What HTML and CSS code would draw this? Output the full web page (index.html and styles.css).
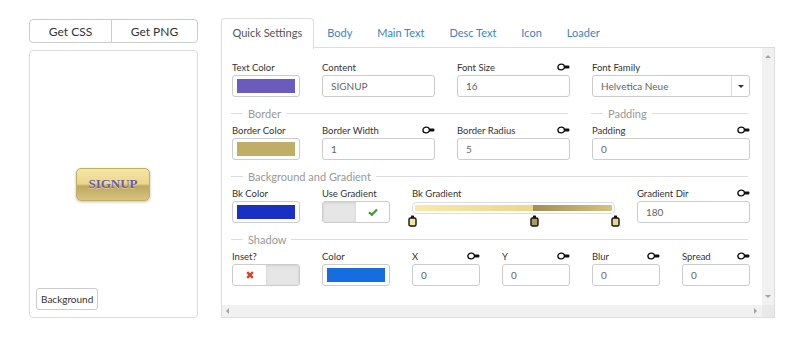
FILE: index.html
```html
<!DOCTYPE html>
<html lang="en">
<head>
    <meta charset="UTF-8">
    <meta name="viewport" content="width=device-width, initial-scale=1.0">
    <title>Button Builder</title>
    <link rel="stylesheet" href="styles.css">
</head>
<body>

    <div class="app">
        <aside class="preview-col">
            <div class="btn-group">
                <button class="css-btn">Get CSS</button>
                <button class="png-btn">Get PNG</button>
            </div>
            <div class="preview">
                <button class="signup">SIGNUP</button>
                <button class="bg-btn">Background</button>
            </div>
        </aside>

        <main class="editor">
            <ul class="tabs">
                <li class="active">Quick Settings</li>
                <li>Body</li>
                <li>Main Text</li>
                <li>Desc Text</li>
                <li>Icon</li>
                <li>Loader</li>
            </ul>

            <div class="panel">
                <div class="panel-body">

                    <div class="row row-a">
                        <div class="field">
                            <label>Text Color</label>
                            <div class="swatch"><span class="c-text"></span></div>
                        </div>
                        <div class="field">
                            <label>Content</label>
                            <div class="input">SIGNUP</div>
                        </div>
                        <div class="field">
                            <label>Font Size <svg class="knob" viewBox="0 0 13 8"><ellipse cx="4.2" cy="4" rx="3.3" ry="2.9"/><rect x="7.6" y="2.5" width="4.8" height="3" rx="1"/></svg></label>
                            <div class="input">16</div>
                        </div>
                        <div class="field">
                            <label>Font Family</label>
                            <div class="input select">Helvetica Neue<span class="caret"></span></div>
                        </div>
                    </div>

                    <div class="row row-a">
                        <h4 class="section span-3">Border</h4>
                        <h4 class="section">Padding</h4>
                        <div class="field">
                            <label>Border Color</label>
                            <div class="swatch"><span class="c-border"></span></div>
                        </div>
                        <div class="field">
                            <label>Border Width <svg class="knob" viewBox="0 0 13 8"><ellipse cx="4.2" cy="4" rx="3.3" ry="2.9"/><rect x="7.6" y="2.5" width="4.8" height="3" rx="1"/></svg></label>
                            <div class="input">1</div>
                        </div>
                        <div class="field">
                            <label>Border Radius <svg class="knob" viewBox="0 0 13 8"><ellipse cx="4.2" cy="4" rx="3.3" ry="2.9"/><rect x="7.6" y="2.5" width="4.8" height="3" rx="1"/></svg></label>
                            <div class="input">5</div>
                        </div>
                        <div class="field">
                            <label>Padding <svg class="knob" viewBox="0 0 13 8"><ellipse cx="4.2" cy="4" rx="3.3" ry="2.9"/><rect x="7.6" y="2.5" width="4.8" height="3" rx="1"/></svg></label>
                            <div class="input">0</div>
                        </div>
                    </div>

                    <div class="row row-c">
                        <h4 class="section span-4">Background and Gradient</h4>
                        <div class="field">
                            <label>Bk Color</label>
                            <div class="swatch"><span class="c-bk"></span></div>
                        </div>
                        <div class="field">
                            <label>Use Gradient</label>
                            <div class="toggle">
                                <span class="off"></span>
                                <span class="on"><svg class="tick" viewBox="0 0 10 8"><path d="M1 4.2 L3.8 6.8 L9 1.4" /></svg></span>
                            </div>
                        </div>
                        <div class="field">
                            <label>Bk Gradient</label>
                            <div class="gradient">
                                <div class="gradient-bar"></div>
                                <svg class="stop" style="left: 0%" viewBox="0 0 9 12"><rect x="3" y="0.6" width="3" height="2.4" rx="0.5" fill="#111"/><rect x="1" y="3" width="7" height="8" rx="1.6" fill="#f6e5a2"/></svg>
                                <svg class="stop" style="left: 60%" viewBox="0 0 9 12"><rect x="3" y="0.6" width="3" height="2.4" rx="0.5" fill="#111"/><rect x="1" y="3" width="7" height="8" rx="1.6" fill="#ae9a5f"/></svg>
                                <svg class="stop" style="left: 100%" viewBox="0 0 9 12"><rect x="3" y="0.6" width="3" height="2.4" rx="0.5" fill="#111"/><rect x="1" y="3" width="7" height="8" rx="1.6" fill="#e9d58f"/></svg>
                            </div>
                        </div>
                        <div class="field">
                            <label>Gradient Dir <svg class="knob" viewBox="0 0 13 8"><ellipse cx="4.2" cy="4" rx="3.3" ry="2.9"/><rect x="7.6" y="2.5" width="4.8" height="3" rx="1"/></svg></label>
                            <div class="input">180</div>
                        </div>
                    </div>

                    <div class="row row-d">
                        <h4 class="section span-6">Shadow</h4>
                        <div class="field">
                            <label>Inset?</label>
                            <div class="toggle">
                                <span class="on"><svg class="cross" viewBox="0 0 8 8"><path d="M1.2 1.2 L6.8 6.8 M6.8 1.2 L1.2 6.8" /></svg></span>
                                <span class="off"></span>
                            </div>
                        </div>
                        <div class="field">
                            <label>Color</label>
                            <div class="swatch"><span class="c-shadow"></span></div>
                        </div>
                        <div class="field">
                            <label>X <svg class="knob" viewBox="0 0 13 8"><ellipse cx="4.2" cy="4" rx="3.3" ry="2.9"/><rect x="7.6" y="2.5" width="4.8" height="3" rx="1"/></svg></label>
                            <div class="input">0</div>
                        </div>
                        <div class="field">
                            <label>Y <svg class="knob" viewBox="0 0 13 8"><ellipse cx="4.2" cy="4" rx="3.3" ry="2.9"/><rect x="7.6" y="2.5" width="4.8" height="3" rx="1"/></svg></label>
                            <div class="input">0</div>
                        </div>
                        <div class="field">
                            <label>Blur <svg class="knob" viewBox="0 0 13 8"><ellipse cx="4.2" cy="4" rx="3.3" ry="2.9"/><rect x="7.6" y="2.5" width="4.8" height="3" rx="1"/></svg></label>
                            <div class="input">0</div>
                        </div>
                        <div class="field">
                            <label>Spread <svg class="knob" viewBox="0 0 13 8"><ellipse cx="4.2" cy="4" rx="3.3" ry="2.9"/><rect x="7.6" y="2.5" width="4.8" height="3" rx="1"/></svg></label>
                            <div class="input">0</div>
                        </div>
                    </div>

                </div>

                <!-- fake scrollbars -->
                <div class="vscroll"><span class="arrow up"></span><span class="arrow down"></span></div>
                <div class="hscroll"><span class="arrow left"></span><span class="arrow right"></span></div>
                <div class="corner"></div>
            </div>
        </main>
    </div>

</body>
</html>
```

FILE: styles.css
```css
body {
    margin: 0;
    background: #fff;
    color: #333;
    font-family: Lato, "Open Sans", sans-serif;
}

.app {
    display: flex;
    gap: 23px;
    padding: 18px 0 0 29px;
}

/* Left preview column */
.preview-col {
    width: 169px;
}

.btn-group {
    display: flex;
    margin-top: 1px;
    height: 24px;
}

.btn-group button {
    background: #fff;
    border: 1px solid #ccc;
    color: #333;
    font-family: inherit;
    font-size: 12px;
    padding: 0;
}

.css-btn {
    width: 83px;
    border-radius: 4px 0 0 4px;
}

.png-btn {
    flex: 1;
    margin-left: -1px;
    border-radius: 0 4px 4px 0;
}

.preview {
    position: relative;
    margin-top: 7px;
    height: 268px;
    box-sizing: border-box;
    border: 1px solid #ddd;
    border-radius: 4px;
    display: flex;
    align-items: center;
    justify-content: center;
}

.signup {
    width: 74px;
    height: 33px;
    margin-left: -1px;
    border: 1px solid #bfae63;
    border-radius: 5px;
    background: linear-gradient(180deg, #f6e6a4 0%, #ead58c 48%, #bfa860 55%, #d8c47e 100%);
    box-shadow: 0 1px 3px rgba(0, 0, 0, 0.25);
    color: #6a5ca8;
    font-family: "Liberation Serif", serif;
    font-weight: bold;
    font-size: 13px;
    text-shadow: 0 1px 0 rgba(255, 255, 255, 0.4);
    padding: 0;
}

.bg-btn {
    position: absolute;
    left: 6px;
    bottom: 7px;
    height: 22px;
    padding: 0 4px;
    background: #fff;
    border: 1px solid #ccc;
    border-radius: 3px;
    font-family: inherit;
    font-size: 10px;
    color: #333;
}

/* Right editor */
.editor {
    width: 554px;
}

.tabs {
    display: flex;
    list-style: none;
    margin: 0;
    padding: 0;
    height: 30px;
    position: relative;
    z-index: 1;
}

.tabs li {
    padding: 0 10.5px;
    margin-right: 2px;
    line-height: 28px;
    border: 1px solid transparent;
    border-bottom: none;
    border-radius: 4px 4px 0 0;
    font-size: 11px;
    color: #3a84c4;
}

.tabs li.active {
    color: #555;
    background: #fff;
    border-color: #ddd;
    height: 30px;
}

.panel {
    display: grid;
    grid-template-columns: 1fr 12px;
    grid-template-rows: 257px 12px;
    border: 1px solid #ddd;
    margin-top: -1px;
    height: 271px;
    box-sizing: border-box;
}

.panel-body {
    padding: 12px 0 0 10px;
    overflow: hidden;
}

.row {
    display: grid;
    column-gap: 22px;
}

.row-a {
    grid-template-columns: 68px 113px 113px 158px;
}

.row-c {
    grid-template-columns: 68px 68px 203px 113px;
}

.row-d {
    grid-template-columns: repeat(6, 68px);
}

.span-3 { grid-column: span 3; }
.span-4 { grid-column: span 4; }
.span-6 { grid-column: span 6; }

.section {
    display: flex;
    align-items: center;
    gap: 5px;
    height: 16px;
    margin: 8px 2px 2px -1px;
    font-size: 11px;
    font-weight: normal;
    color: #999;
    white-space: nowrap;
}

.section::before {
    content: "";
    width: 12px;
    border-top: 1px solid #ddd;
}

.section::after {
    content: "";
    flex: 1;
    border-top: 1px solid #ddd;
}

.field label {
    display: flex;
    justify-content: space-between;
    align-items: center;
    height: 14px;
    margin-bottom: 1px;
    font-size: 9.5px;
    color: #333;
    white-space: nowrap;
}

.knob {
    width: 13px;
    height: 8px;
}

.knob ellipse {
    fill: none;
    stroke: #111;
    stroke-width: 1.4;
}

.knob rect {
    fill: #111;
}

.input {
    position: relative;
    height: 22px;
    box-sizing: border-box;
    border: 1px solid #ccc;
    border-radius: 3px;
    padding: 0 8px;
    font-size: 10px;
    line-height: 20px;
    color: #666;
}

.select .caret {
    position: absolute;
    right: 0;
    top: 0;
    bottom: 0;
    width: 17px;
    border-left: 1px solid #ddd;
}

.select .caret::after {
    content: "";
    position: absolute;
    left: 6px;
    top: 9px;
    border-left: 3px solid transparent;
    border-right: 3px solid transparent;
    border-top: 3px solid #333;
}

.swatch {
    display: flex;
    height: 22px;
    box-sizing: border-box;
    border: 1px solid #ccc;
    border-radius: 3px;
    padding: 3px 4px;
}

.swatch span {
    flex: 1;
}

.c-text { background: #6a5bbd; }
.c-border { background: #bfae66; }
.c-bk { background: #1a30c4; }
.c-shadow { background: #166ddf; }

.toggle {
    display: flex;
    height: 22px;
    box-sizing: border-box;
    border: 1px solid #ccc;
    border-radius: 3px;
    overflow: hidden;
}

.toggle span {
    flex: 1;
    display: flex;
    align-items: center;
    justify-content: center;
}

.toggle .off {
    background: #e6e6e6;
    box-shadow: inset 0 1px 3px rgba(0, 0, 0, 0.1);
}

.tick {
    width: 10px;
    height: 8px;
}

.tick path {
    fill: none;
    stroke: #3c9a3c;
    stroke-width: 2.2;
}

.cross {
    width: 8px;
    height: 8px;
}

.cross path {
    stroke: #d9432b;
    stroke-width: 2.4;
}

.gradient {
    position: relative;
    padding-top: 1px;
}

.gradient-bar {
    height: 12px;
    box-sizing: border-box;
    border: 1px solid #ddd;
    border-radius: 4px;
    padding: 2px;
    background: linear-gradient(90deg, #f8e9ab 0%, #ead68d 60%, #a38f55 60%, #d6c27c 100%) content-box;
}

.stop {
    position: absolute;
    top: 14px;
    width: 9px;
    height: 12px;
    margin-left: -4px;
}

.stop rect:last-child {
    stroke: #111;
    stroke-width: 1.4;
}

/* scrollbars */
.vscroll,
.hscroll {
    position: relative;
    background: #f1f1f1;
}

.corner {
    background: #e9e9e9;
}

.arrow {
    position: absolute;
    width: 0;
    height: 0;
}

.arrow.up {
    top: 7px;
    left: 3px;
    border-left: 3px solid transparent;
    border-right: 3px solid transparent;
    border-bottom: 3px solid #a3a3a3;
}

.arrow.down {
    bottom: 7px;
    left: 3px;
    border-left: 3px solid transparent;
    border-right: 3px solid transparent;
    border-top: 3px solid #a3a3a3;
}

.arrow.left {
    left: 4px;
    top: 3px;
    border-top: 3px solid transparent;
    border-bottom: 3px solid transparent;
    border-right: 3px solid #a3a3a3;
}

.arrow.right {
    right: 5px;
    top: 3px;
    border-top: 3px solid transparent;
    border-bottom: 3px solid transparent;
    border-left: 3px solid #a3a3a3;
}
```
